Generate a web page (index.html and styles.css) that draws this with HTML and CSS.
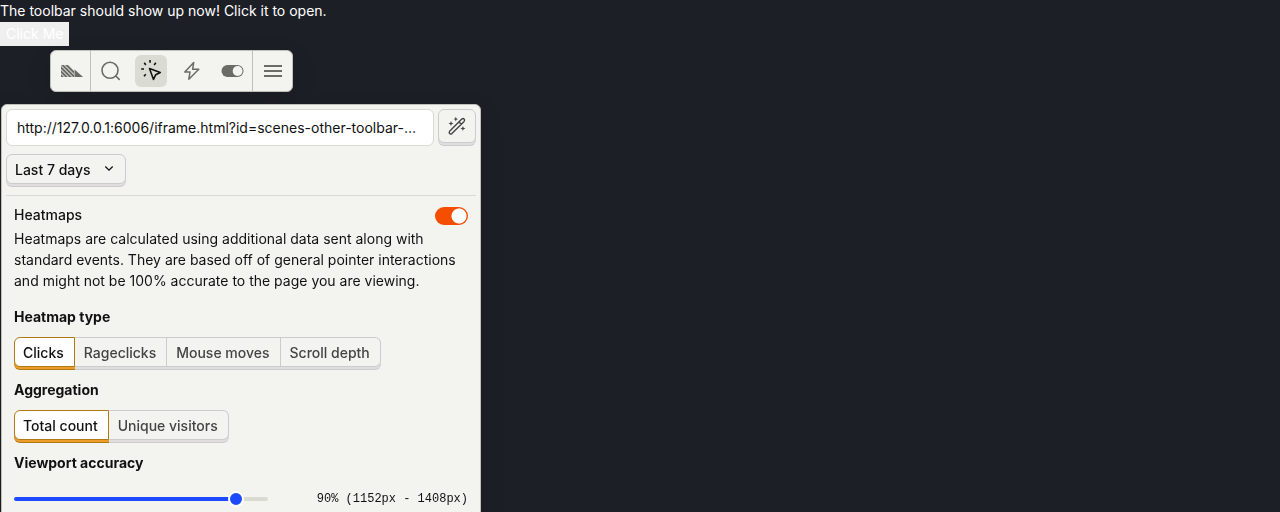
FILE: index.html
```html
<!DOCTYPE html>
<html lang="en">
<head>
<meta charset="utf-8">
<title>Toolbar</title>
<link rel="stylesheet" href="styles.css">
</head>
<body>
<main class="page">
  <p class="page-text">The toolbar should show up now! Click it to open.</p>
  <button class="page-button" type="button">Click Me</button>
</main>

<nav class="toolbar" aria-label="Toolbar">
  <button class="tool tool-logo" type="button" aria-label="Home">
    <svg class="tool-icon" viewBox="0 0 32 32"><clipPath id="stripes"><path d="M6 10h13v12H6z"/></clipPath><g clip-path="url(#stripes)" fill="none" stroke="currentColor" stroke-width="2.100"><path d="M4 18.500l6 6M4 14.500l10 10M4 10.500l14 14M6 8.500l16 16M10 8.500l12 12"/></g><path fill="currentColor" d="M19.500 14.500l7.200 6.200c.700.500 1 .700 1 1.300h-8.200z"/></svg>
  </button>
  <div class="tool-group">
    <button class="tool" type="button" aria-label="Inspect">
      <svg class="tool-icon" viewBox="0 0 32 32" fill="none" stroke="currentColor" stroke-width="1.600" stroke-linecap="round"><circle cx="15" cy="15.300" r="8"/><path d="M20.800 21l3.400 3.400"/></svg>
    </button>
    <button class="tool tool-active" type="button" aria-label="Heatmap" aria-pressed="true">
      <svg class="tool-icon" viewBox="0 0 32 32" fill="none" stroke="currentColor" stroke-width="1.600" stroke-linejoin="round"><path d="M14.500 13.500l10.800 4-4.600 2.200-2.200 4.800zM15 5v2.800M9.300 7.800l1.500 2.200M20.800 7.800l-1.600 2.100M6.200 14H9M9 21.200l1.800-2"/></svg>
    </button>
    <button class="tool" type="button" aria-label="Actions">
      <svg class="tool-icon" viewBox="0 0 32 32" fill="none" stroke="currentColor" stroke-width="1.500" stroke-linejoin="round"><path d="M18.700 7.600l-8.900 9.400h5.200l-1.200 7.200 10-9.900h-6.200z"/></svg>
    </button>
    <button class="tool" type="button" aria-label="Feature flags">
      <svg class="tool-icon" viewBox="0 0 32 32"><rect x="6.500" y="10" width="22" height="12" rx="6" fill="currentColor"/><circle class="flag-knob" cx="22.600" cy="16" r="4.900"/></svg>
    </button>
  </div>
  <button class="tool tool-menu" type="button" aria-label="More options">
    <svg class="tool-icon" viewBox="0 0 32 32" fill="none" stroke="currentColor" stroke-width="2"><path d="M7 11h18M7 16h18M7 21h18"/></svg>
  </button>
</nav>

<section class="panel" aria-label="Heatmap settings">
  <header class="panel-header">
    <div class="url-row">
      <input class="url-input" type="text" aria-label="Page URL" value="http://127.0.0.1:6006/iframe.html?id=scenes-other-toolbar--heatmap&amp;viewMode=story">
      <button class="raised wand" type="button" aria-label="Use wildcard">
        <svg class="wand-icon" viewBox="0 0 20 20" fill="none" stroke="currentColor" stroke-width="1.400" stroke-linejoin="round"><path d="M2.600 15.300L14.800 3.100q1.300-1 2.300 0 1 1 0 2.300L4.900 17.600q-1.300.900-2.300 0-.900-1 0-2.300zM12 5.900l2.300 2.300"/><path fill="currentColor" stroke="none" d="M4 5l.700 1.800 1.800.7-1.800.700L4 10l-.7-1.800-1.800-.7 1.800-.7zM8.800.800l.700 1.600 1.600.7-1.600.700-.7 1.600-.7-1.600-1.600-.7 1.600-.7zM15.900 10l.700 1.800 1.800.7-1.800.700-.7 1.800-.7-1.800-1.800-.7 1.800-.7z"/></svg>
      </button>
    </div>
    <button class="raised date" type="button">Last 7 days
      <svg class="chevron" viewBox="0 0 16 16" fill="none" stroke="currentColor" stroke-width="1.300"><path d="M4.300 5.500L8 9.200l3.700-3.700"/></svg>
    </button>
  </header>
  <div class="settings">
    <div class="switch-row">
      <label class="switch-label" for="heatmaps">Heatmaps</label>
      <input class="switch" id="heatmaps" type="checkbox" role="switch" checked>
    </div>
    <p class="description">Heatmaps are calculated using additional data sent along with standard events. They are based off of general pointer interactions and might not be 100% accurate to the page you are viewing.</p>
    <h2 class="heading heading-first" id="type">Heatmap type</h2>
    <div class="segments" role="group" aria-labelledby="type">
      <button class="raised segment selected" type="button" aria-pressed="true">Clicks</button>
      <button class="raised segment" type="button">Rageclicks</button>
      <button class="raised segment" type="button">Mouse moves</button>
      <button class="raised segment" type="button">Scroll depth</button>
    </div>
    <h2 class="heading" id="aggregation">Aggregation</h2>
    <div class="segments" role="group" aria-labelledby="aggregation">
      <button class="raised segment selected" type="button" aria-pressed="true">Total count</button>
      <button class="raised segment" type="button">Unique visitors</button>
    </div>
    <h2 class="heading" id="accuracy">Viewport accuracy</h2>
    <div class="slider-row">
      <input class="slider" type="range" min="0" max="100" value="90" aria-labelledby="accuracy">
      <output class="range-value">90% (1152px - 1408px)</output>
    </div>
  </div>
</section>
</body>
</html>
```
FILE: styles.css
```css
* {
  box-sizing: border-box;
}

body {
  margin: 0;
  overflow: hidden;
  background: #1d1f27;
  color: #111;
  font: 14px/21px Inter, sans-serif;
  text-rendering: optimizeSpeed;
}

button,
input {
  margin: 0;
  font: inherit;
  color: inherit;
  text-rendering: inherit;
}

.page {
  color: #fff;
}

.page-text {
  margin: 0;
  line-height: 22px;
}

.page-button {
  display: block;
  height: 24px;
  padding: 0 6px 2px;
  border: 0;
  background: #efefef;
}

.toolbar {
  position: fixed;
  top: 50px;
  left: 50px;
  display: flex;
  height: 42px;
  border: 1px solid #bfc0b8;
  border-radius: 6px;
  background: #f3f4ef;
  box-shadow: 0 8px 24px rgba(0, 0, 0, 0.12);
}

.tool {
  display: flex;
  align-items: center;
  justify-content: center;
  width: 32px;
  height: 32px;
  padding: 0;
  border: 0;
  border-radius: 6px;
  background: none;
  color: #6b6c66;
}

.tool-icon {
  width: 32px;
  height: 32px;
  flex: none;
}

.tool-logo,
.tool-menu {
  width: 40px;
  height: 100%;
  border-radius: 0;
}

.tool-logo {
  border-right: 1px solid #bfc0b8;
}

.tool-menu {
  border-left: 1px solid #bfc0b8;
}

.tool-group {
  display: flex;
  gap: 8px;
  padding: 4px 5px 4px 4px;
}

.tool-active {
  background: #dadbd2;
  color: #111;
}

.flag-knob {
  fill: #f3f4ef;
}

.panel {
  position: fixed;
  top: 104px;
  left: 1px;
  width: 480px;
  padding: 4px 4px 16px;
  border: 1px solid #bfc0b8;
  border-radius: 6px;
  background: #f3f4ef;
  box-shadow: 0 8px 24px rgba(0, 0, 0, 0.12);
}

.panel-header {
  padding-bottom: 8px;
  border-bottom: 1px solid #d9dbd0;
}

.url-row {
  display: flex;
  gap: 4px;
  margin-bottom: 8px;
}

.url-input {
  flex: 1;
  min-width: 0;
  height: 37px;
  padding: 0 14px 0 10px;
  border: 1px solid #d9dbd0;
  border-radius: 6px;
  background: #fff;
  text-overflow: ellipsis;
}

.raised {
  display: flex;
  align-items: center;
  height: 30px;
  margin-bottom: 3px;
  padding: 0 8px;
  border: 1px solid #ccc;
  border-radius: 6px;
  background: #f3f4ef;
  box-shadow: 0 2px 0 #e0dddc, 0 3px 0 #ccc;
  font-weight: 500;
  white-space: nowrap;
}

.wand {
  justify-content: center;
  width: 38px;
  height: 34px;
  color: #444;
}

.wand-icon {
  width: 20px;
  height: 20px;
  flex: none;
}

.date {
  justify-content: space-between;
  min-width: 120px;
}

.chevron {
  width: 16px;
  height: 16px;
}

.settings {
  padding: 8px;
}

.switch-row {
  display: flex;
  justify-content: space-between;
  height: 24px;
  font-weight: 500;
}

.switch-label {
  line-height: 22px;
}

.switch {
  appearance: none;
  align-self: center;
  width: 33px;
  height: 18px;
  border-radius: 9px;
  background: radial-gradient(circle at 24px 9px, #fff 7px, #f54e00 8px);
}

.description {
  margin: 0;
}

.heading {
  margin: 8px 0;
  font-size: 14px;
  font-weight: 700;
  line-height: 24px;
}

.heading-first {
  margin-top: 14px;
}

.segments {
  display: flex;
}

.segment {
  padding: 0 10px 0 9px;
  border-left-width: 0;
  border-radius: 0;
  color: #444;
}

.segment:first-child {
  padding-left: 8px;
  border-left-width: 1px;
  border-radius: 6px 0 0 6px;
}

.segment:last-child {
  border-radius: 0 6px 6px 0;
}

.segment.selected {
  border-color: #b17816;
  background: #fff;
  box-shadow: 0 2px 0 #eb9d2a, 0 3px 0 #b17816;
  color: #111;
}

.slider-row {
  display: flex;
  align-items: center;
  justify-content: space-between;
  height: 32px;
}

.slider {
  appearance: none;
  width: 56%;
  height: 16px;
  background: none;
}

.slider::-webkit-slider-runnable-track {
  height: 4px;
  border-radius: 2px;
  background: linear-gradient(to right, #1d4aff 88%, #d9dbd0 88%);
}

.slider::-webkit-slider-thumb {
  appearance: none;
  width: 16px;
  height: 16px;
  margin-top: -6px;
  border: 2px solid #fff;
  border-radius: 50%;
  background: #1d4aff;
}

.range-value {
  font: 12px/16px "Liberation Mono", monospace;
}
```
